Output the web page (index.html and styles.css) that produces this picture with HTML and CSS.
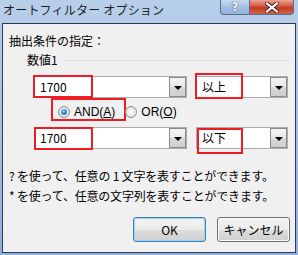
FILE: index.html
```html
<!DOCTYPE html>
<html lang="ja">
<head>
<meta charset="utf-8">
<link rel="stylesheet" href="styles.css">
</head>
<body>
<div class="window">
  <div class="titlebar">
    <span class="title">オートフィルター オプション</span>
    <div class="caption-buttons">
      <div class="cap help">?</div>
      <div class="cap close"><svg width="14" height="11" viewBox="0 0 14 11"><path d="M2 1.5 L12 9.5 M12 1.5 L2 9.5" stroke="#3a2020" stroke-width="4" stroke-linecap="square"/><path d="M2 1.5 L12 9.5 M12 1.5 L2 9.5" stroke="#ffffff" stroke-width="2.2" stroke-linecap="square"/></svg></div>
    </div>
  </div>
  <div class="client">
    <div class="heading">抽出条件の指定：</div>
    <div class="group-label"><span>数値1</span><span class="rule"></span></div>

    <div class="row row1">
      <div class="combo value"><span class="val">1700</span><span class="arrow"></span><span class="mark m1"></span></div>
      <div class="combo op"><span class="val">以上</span><span class="arrow"></span><span class="mark m2"></span></div>
    </div>

    <div class="radios">
      <label class="radio on"><span class="dot"></span>AND(<u>A</u>)<span class="mark m3"></span></label>
      <label class="radio"><span class="dot"></span>OR(<u>O</u>)</label>
    </div>

    <div class="row row2">
      <div class="combo value"><span class="val">1700</span><span class="arrow"></span><span class="mark m4"></span></div>
      <div class="combo op"><span class="val">以下</span><span class="arrow"></span><span class="mark m5"></span></div>
    </div>

    <p class="hint first">? を使って、任意の 1 文字を表すことができます。</p>
    <p class="hint">* を使って、任意の文字列を表すことができます。</p>

    <div class="buttons">
      <button class="btn default">OK</button>
      <button class="btn">キャンセル</button>
    </div>
  </div>
</div>
</body>
</html>
```

FILE: styles.css
```css
* { box-sizing: border-box; }
html, body { margin: 0; padding: 0; }
body {
  width: 298px;
  height: 255px;
  overflow: hidden;
  font-family: "Noto Sans CJK JP", "Noto Sans", sans-serif;
  font-size: 12px;
  color: #000;
}
.window {
  width: 298px;
  height: 255px;
  background: linear-gradient(180deg, #b8cfea 0%, #a7c2e6 40%, #8fb0dc 100%);
  padding: 0 2px 2px 2px;
  display: flex;
  flex-direction: column;
}
.titlebar {
  height: 23px;
  display: flex;
  justify-content: space-between;
  align-items: flex-start;
  flex: none;
}
.title {
  font-size: 12px;
  line-height: 16px;
  margin-top: 2px;
  margin-left: 1px;
  color: #1e1e1e;
  letter-spacing: 0.2px;
}
.caption-buttons {
  display: flex;
  margin-right: 2px;
}
.cap {
  height: 15px;
  border: 1px solid #5a6e8c;
  border-top: none;
  display: flex;
  align-items: center;
  justify-content: center;
}
.help {
  width: 29px;
  border-radius: 0 0 0 4px;
  background: linear-gradient(180deg, #c8daf0 0%, #a6c0e2 50%, #93b2da 100%);
  color: #fff;
  font-family: "DejaVu Sans", sans-serif;
  font-weight: bold;
  font-size: 12px;
  line-height: 14px;
  text-shadow: 0 0 1px #2a3a55, 0 0 1px #2a3a55;
  border-right: none;
}
.close {
  width: 45px;
  border-radius: 0 0 4px 0;
  background: linear-gradient(180deg, #e8a494 0%, #d4573e 45%, #c33c23 55%, #d2644c 100%);
}
.client {
  flex: 1;
  background: #f0f0f0;
  border: 1px solid #2d3a4e;
  padding: 9px 0 0 6px;
  display: flex;
  flex-direction: column;
}
.heading {
  line-height: 16px;
  height: 16px;
}
.group-label {
  margin-top: 3px;
  margin-left: 18px;
  display: flex;
  align-items: center;
  line-height: 16px;
  height: 16px;
}
.rule {
  flex: none;
  width: 225px;
  height: 1px;
  margin-left: 6px;
  background: #d5dfe5;
}
.row {
  display: flex;
  height: 22px;
  margin-left: 25px;
  position: relative;
}
.row1 { margin-top: 8px; }
.row2 { margin-top: 4px; }
.combo {
  position: relative;
  height: 22px;
  background: #fff;
  border: 1px solid #abadb3;
  display: flex;
  align-items: center;
}
.combo.value { width: 153px; }
.combo.op { width: 92px; margin-left: 9px; }
.val {
  flex: 1;
  padding-left: 5px;
  line-height: 16px;
  color: #000;
}
.arrow {
  width: 17px;
  height: 20px;
  border: 1px solid #8a8a8a;
  background: linear-gradient(180deg, #f4f4f4 0%, #e8e8e8 50%, #d8d8d8 51%, #cfcfcf 100%);
  position: relative;
}
.arrow::after {
  content: "";
  position: absolute;
  left: 4px;
  top: 8px;
  border-left: 4px solid transparent;
  border-right: 4px solid transparent;
  border-top: 4px solid #000;
}
.mark {
  position: absolute;
  border: 2px solid #ee1c24;
  pointer-events: none;
}
.m1 { left: -2px; top: -2px; width: 60px; height: 23px; }
.m2 { left: -2px; top: -4px; width: 48px; height: 26px; }
.m3 { left: -7px; top: -6px; width: 75px; height: 23px; }
.m4 { left: -1px; top: -1px; width: 59px; height: 23px; }
.m5 { left: 0px; top: 0px; width: 46px; height: 26px; }
.radios {
  display: flex;
  height: 22px;
  margin-top: 3px;
  margin-left: 49px;
  align-items: center;
  line-height: 16px;
}
.radio {
  position: relative;
  display: flex;
  align-items: center;
  font-family: "Liberation Sans", "Noto Sans", sans-serif;
  font-size: 12px;
}
.radio u { text-decoration: underline; text-underline-offset: 1px; }
.radio + .radio { margin-left: 10px; }
.dot {
  width: 12px;
  height: 12px;
  border-radius: 50%;
  border: 1px solid #8e8f8f;
  background: radial-gradient(circle at 50% 50%, #ffffff 0%, #e6e6e6 60%, #cfcfcf 100%);
  margin-right: 4px;
  position: relative;
}
.radio.on .dot::after {
  content: "";
  position: absolute;
  left: 2px;
  top: 2px;
  width: 6px;
  height: 6px;
  border-radius: 50%;
  background: radial-gradient(circle at 40% 35%, #8fd3f3 0%, #2b8ad0 50%, #0f4d86 100%);
}
.hint {
  margin: 0;
  line-height: 16px;
  height: 16px;
  letter-spacing: -0.2px;
}
.hint.first { margin-top: 19px; }
.hint + .hint { margin-top: 4px; }
.buttons {
  display: flex;
  margin-top: 13px;
  margin-left: 124px;
}
.btn {
  width: 73px;
  height: 25px;
  border: 1px solid #707070;
  border-radius: 3px;
  background: linear-gradient(180deg, #f2f2f2 0%, #ebebeb 50%, #dddddd 51%, #cfcfcf 100%);
  box-shadow: inset 0 0 0 1px #fbfbfb;
  font-family: "Noto Sans CJK JP", "Liberation Sans", sans-serif;
  font-size: 12px;
  padding: 0;
  color: #000;
}
.btn + .btn { margin-left: 11px; }
.btn.default {
  border-color: #3c7fb1;
  box-shadow: inset 0 0 0 1px #9ed6f2;
}
```
